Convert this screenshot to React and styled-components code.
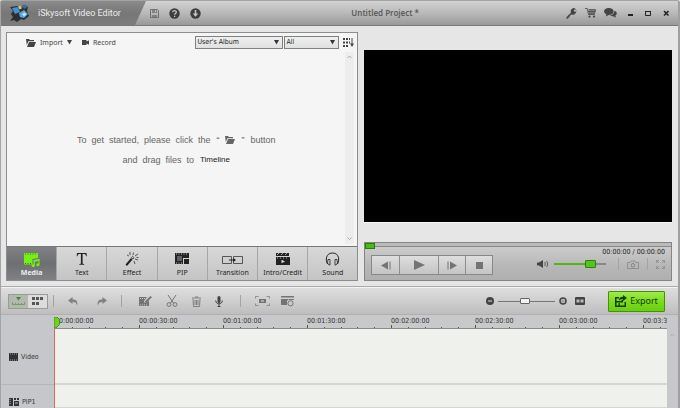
import React from "react";
import styled, { createGlobalStyle, css } from "styled-components";

const ui = `"DejaVu Sans Condensed", "Noto Sans", "DejaVu Sans", sans-serif`;
const body = `"Noto Sans", "Open Sans", sans-serif`;

const GlobalStyle = createGlobalStyle`
  * { box-sizing: border-box; }
  body { margin: 0; background: #e6e6e6; font-family: ${body}; font-size: 7px; color: #333; overflow: hidden; }
  button, select, input { font: inherit; color: inherit; margin: 0; }
`;

const Window = styled.div`
  min-height: 100vh;
  display: flex;
  flex-direction: column;
  border: 1px solid #a4a4a4;
  border-bottom: 0;
  border-right: 2px solid #a0a0a0;
  border-radius: 3px 3px 0 0;
  background: #e6e6e6;
`;

const TitleBar = styled.header`
  height: 25px;
  display: flex;
  align-items: center;
  background: linear-gradient(#d2d2d2, #b9b9b9 50%, #999);
  border-bottom: 1px solid #777;
`;

const Brand = styled.div`
  width: 145px;
  height: 100%;
  display: flex;
  align-items: center;
  gap: 6px;
  padding-left: 9px;
  color: #ececec;
  white-space: nowrap;
  background: linear-gradient(#8b8b8b, #777 50%, #7d7d7d);
  clip-path: polygon(0 0, 100% 0, 134px 100%, 0 100%);
`;

const BrandName = styled.h1`
  margin: 0;
  font: 400 9px/12px Roboto, ${body};
`;

const ProjectTitle = styled.div`
  flex: 1;
  text-align: right;
  padding-right: 147px;
  font-size: 8px;
  font-weight: 600;
  line-height: 12px;
  color: #5c5c5c;
`;

const IconRow = styled.div`
  display: flex;
  align-items: center;
  gap: ${(p) => p.$gap || 8}px;
  padding: 0 ${(p) => p.$right || 0}px 0 ${(p) => p.$left || 0}px;
`;

const IconButton = styled.button`
  display: inline-flex;
  align-items: center;
  gap: 4px;
  padding: 0;
  border: 0;
  background: none;
  line-height: 12px;
  white-space: nowrap;
  color: ${(p) => p.$tone || "#444"};
`;

const Workspace = styled.main`
  display: flex;
  gap: 6px;
  padding: 6px 6px 5px 5px;
  border-bottom: 1px solid #aaa;
`;

const MediaPanel = styled.section`
  flex: 352 1 0;
  min-width: 0;
  display: flex;
  flex-direction: column;
  border: 1px solid #8d8d8d;
  background: #f5f5f5;
`;

const MediaHeader = styled.div`
  display: flex;
  align-items: center;
  height: 19px;
  padding: 0 3px 0 19px;
`;

const Spacer = styled.div`
  flex: 1;
`;

const SelectBox = styled.label`
  position: relative;
  display: flex;
  width: ${(p) => p.$width}px;
  margin-right: ${(p) => p.$after}px;

  svg { position: absolute; right: 4px; top: 4px; pointer-events: none; }
`;

const Select = styled.select`
  appearance: none;
  width: 100%;
  height: 13px;
  padding: 0 1px;
  border: 1px solid #808080;
  border-radius: 0;
  background: linear-gradient(#f0f0f0, #e0e0e0);
  color: #222;
  line-height: 11px;
  font-size: 7px;
  font-family: ${ui};
`;

const DropArea = styled.div`
  flex: 1;
  display: flex;
  min-height: 194px;
`;

const Hint = styled.div`
  flex: 1;
  padding-top: 78px;
  font: 9px/20px "Liberation Sans", Arial, sans-serif;
  color: #666;
`;

const HintLine = styled.p`
  display: flex;
  justify-content: center;
  align-items: center;
  gap: 6px;
  margin: 0;
  white-space: pre;

  strong { font-weight: 400; font-size: 8px; color: #222; }
`;

const ScrollRail = styled.div`
  width: ${(p) => p.$width || 9}px;
  margin: ${(p) => (p.$width ? "0" : "0 3px 2px 0")};
  display: flex;
  flex-direction: column;
  justify-content: space-between;
  align-items: center;
  padding: ${(p) => (p.$width ? 18 : 3)}px 0 3px;
  background: ${(p) => p.$tone || "#ededed"};
`;

const Tabs = styled.nav`
  display: flex;
  height: 34px;
  border-top: 1px solid #777;
  background: linear-gradient(#d8d8d8, #c4c4c4);
`;

const Tab = styled.button`
  flex: 1 1 0;
  min-width: 0;
  padding: 5px 0 0;
  display: flex;
  flex-direction: column;
  align-items: center;
  border: 0;
  border-left: 1px solid #a6a6a6;
  background: none;
  line-height: 11px;
  color: #222;
  ${(p) =>
    p.$active &&
    css`
      border-left: 0;
      background: linear-gradient(#808184, #6e6f72 50%, #808184);
      color: #eee;
      font-weight: 700;
    `}
`;

const PreviewPanel = styled.section`
  flex: 309 1 0;
  min-width: 0;
  display: flex;
  flex-direction: column;
  padding-top: 18px;
`;

const Screen = styled.div`
  aspect-ratio: 309 / 174;
  background: #000;
  border-bottom: 1px solid #f8f8f8;
`;

const Player = styled.div`
  margin-top: auto;
  height: 39px;
  border: 1px solid #858585;
  background: linear-gradient(#d0d0d0, #b6b6b6 65%, #b0b0b0);
`;

const Progress = styled.div`
  height: 4px;
  background: #bbb;
  border-bottom: 1px solid #888;
`;

const PlayHead = styled.div`
  width: 10px;
  height: 6px;
  background: #4cba16;
  border: 1px solid #2c7d08;
`;

const PlayerBody = styled.div`
  display: flex;
  justify-content: space-between;
  padding: 0 6px;
`;

const Transport = styled.div`
  display: flex;
  height: 20px;
  margin-top: 8px;
  border: 1px solid #888;
  background: linear-gradient(#dedede, #c4c4c4);
`;

const TransportButton = styled.button`
  width: ${(p) => (p.$wide ? 39 : 27)}px;
  display: flex;
  align-items: center;
  justify-content: center;
  padding: 0;
  border: 0;
  border-left: ${(p) => (p.$first ? 0 : 1)}px solid #8e8e8e;
  background: none;
  color: #747474;
`;

const Status = styled.div`
  display: flex;
  flex-direction: column;
  align-items: flex-end;
`;

const Clock = styled.time`
  font: 7px/11px ${ui};
  color: #222;
`;

const Divider = styled.div`
  width: 1px;
  height: 12px;
  background: #a3a3a3;
`;

const Range = styled.input.attrs({ type: "range" })`
  appearance: none;
  width: ${(p) => p.$width}px;
  height: 10px;
  background: ${(p) =>
    p.$green
      ? "linear-gradient(90deg, #52b51c 70%, #888 70%) center / 100% 2px no-repeat"
      : "linear-gradient(#777, #777) center / 100% 1px no-repeat"};

  &::-webkit-slider-thumb {
    appearance: none;
    width: ${(p) => (p.$green ? 11 : 10)}px;
    height: ${(p) => (p.$green ? 8 : 6)}px;
    border: 1px solid ${(p) => (p.$green ? "#317c10" : "#666")};
    border-radius: 1px;
    background: ${(p) => (p.$green ? "#55c41c" : "#f2f2f2")};
  }
`;

const ToolBar = styled.div`
  height: 28px;
  display: flex;
  align-items: center;
  padding: 0 13px 0 7px;
  border-top: 1px solid #f4f4f4;
  background: linear-gradient(#dedede, #bebebe);
  border-bottom: 1px solid #b0b0b0;
`;

const ViewToggle = styled.div`
  display: flex;
  height: 15px;
  border: 1px solid #9a9a9a;
`;

const ViewButton = styled.button`
  width: 19px;
  display: flex;
  align-items: center;
  justify-content: center;
  padding: 0;
  border: 0;
  color: #555;
  background: ${(p) => (p.$active ? "#b4b8b0" : "#dcdcdc")};
`;

const ExportButton = styled.button`
  display: flex;
  align-items: center;
  justify-content: center;
  gap: 3px;
  width: 57px;
  height: 21px;
  margin-left: 23px;
  padding: 0;
  border: 1px solid #4b8d0c;
  border-radius: 1px;
  background: linear-gradient(#9fec4a, #7bdc1c 50%, #69cf10);
  font-size: 9px;
  font-weight: 400;
  line-height: 12px;
  color: #163c05;
`;

const Timeline = styled.section`
  flex: 1;
  display: flex;
  background: #c8c9cb;
`;

const TrackNames = styled.div`
  width: 53px;
  padding-top: 14px;
  background: #c6c7ca;
`;

const TrackName = styled.div`
  display: flex;
  align-items: center;
  gap: 3px;
  height: ${(p) => p.$height}px;
  padding-left: 8px;
  font: 7px/12px ${ui};
  color: #333;
  border-bottom: 1px solid #b5b5b8;
`;

const Lanes = styled.div`
  flex: 1;
  min-width: 0;
  display: flex;
  flex-direction: column;
  position: relative;
`;

const Ruler = styled.div`
  height: 14px;
  display: flex;
  overflow: hidden;
  padding-left: 1px;
  border-bottom: 1px solid #8b8b8b;
`;

const RulerMark = styled.div`
  flex: none;
  width: 84px;
  padding-top: 2px;
  display: flex;
  flex-direction: column;
  justify-content: space-between;
  font: 7px/8px ${ui};
  color: #333;
`;

const Ticks = styled.div`
  display: grid;
  grid-template-columns: repeat(5, 1fr);
  align-items: end;
  height: 3px;
`;

const Tick = styled.span`
  height: ${(p) => (p.$major ? 3 : 1)}px;
  border-left: 1px solid #555;
`;

const Lane = styled.div`
  height: ${(p) => p.$height}px;
  border-bottom: 2px solid #d4d6d2;
  background: #eff1ec;
`;

const Cursor = styled.div`
  position: absolute;
  inset: 2px auto 0 0;
  width: 1px;
  background: #dc6464;

  svg { display: block; }
`;

const Icon = ({ w, h, children }) => (
  <svg width={w} height={h} viewBox={`0 0 ${w} ${h}`} fill="currentColor" aria-hidden="true">
    {children}
  </svg>
);

const stroke = { fill: "none", stroke: "currentColor" };

const Logo = () => (
  <Icon w={22} h={20}>
    <path d="M0 4l8-1 4 3 1-4 5 2-1 4 2 5-5 4-3-1-4 3-3-2-4 1 3-4-2-3 2-3z" fill="#2b2f33" />
    <path d="M2 5l6-1 2 5-5 2z" fill="#4a8fcb" />
    <path d="M8 3.500l2-1 1.500 3-2 1z" fill="#d9cd7e" />
    <path d="M9 10l5-3 4 4-4 4-4-1z" fill="#5ba7e0" />
    <path d="M12 11l2.500-1.500 2 2-2.500 2z" fill="#c4e2f2" />
    <path d="M12 2.500l4-1 1 3-3 1.500z" fill="#3b6d98" />
  </Icon>
);
const Save = () => (
  <Icon w={9} h={9}>
    <path d="M.5.5h7l1 1v7h-8z" {...stroke} />
    <path d="M2 1h5v3H2zM2 6h5v3H2z" opacity=".75" />
    <path d="M5 1h1v2H5z" fill="#bbb" />
  </Icon>
);
const Help = () => (
  <Icon w={11} h={11}>
    <circle cx="5.5" cy="5.5" r="5.2" />
    <path d="M3.7 4.2c0-2.2 3.7-2.1 3.6 0 0 1.3-1.7 1.2-1.7 2.5M5.6 7.8v1.2" fill="none" stroke="#c4c4c4" strokeWidth="1.3" />
  </Icon>
);
const Download = () => (
  <Icon w={11} h={11}>
    <circle cx="5.5" cy="5.5" r="5.2" />
    <path d="M4.7 2h1.6v3.5h2L5.5 8.8 2.7 5.5h2z" fill="#c4c4c4" />
  </Icon>
);
const Key = () => (
  <Icon w={12} h={11}>
    <path d="M8 0a3.4 3.4 0 0 0-3.1 4.7L.6 9l-.2 1.7 2-.1V9.3h1.2V8.1l1.9-1.6A3.4 3.4 0 1 0 8 0zm1 1.600a1.100 1.100 0 1 1 0 2.200 1.100 1.100 0 0 1 0-2.200z" fillRule="evenodd" />
  </Icon>
);
const Cart = () => (
  <Icon w={12} h={10}>
    <path d="M0 .5h2.2l1.3 6H10M3.2 1.8h7.6L9.6 5.2H3.7M5 1v5M7 1v5M9 1v5M3 3.5h7" {...stroke} strokeWidth=".8" />
    <circle cx="4.5" cy="8.6" r="1.1" />
    <circle cx="9" cy="8.6" r="1.1" />
  </Icon>
);
const Chat = () => (
  <Icon w={13} h={10}>
    <path d="M4.8 0c2.8 0 4.8 1.5 4.8 3.5S7.400 7 4.800 7L2 8.600l.3-2.300C1 5.700 0 4.700 0 3.500 0 1.500 2 0 4.800 0z" />
    <path d="M10.400 2.800c1.500.4 2.400 1.300 2.400 2.500 0 1-.6 1.700-1.400 2.200l.3 2.300-2.500-1.600c-1.300.1-2.500-.2-3.200-.8 2.600-.2 4.400-1.900 4.400-4.600z" />
  </Icon>
);
const Minimize = () => <Icon w={7} h={7}><path d="M1 4h5v2H1z" /></Icon>;
const Maximize = () => <Icon w={7} h={7}><path d="M.5 1.500h5v4h-5zM0 1.500h6" {...stroke} /></Icon>;
const Close = () => <Icon w={7} h={7}><path d="M1 1l4.500 4.500M5.500 1L1 5.500" {...stroke} strokeWidth="1.600" /></Icon>;
const Folder = () => (
  <Icon w={10} h={8}>
    <path d="M0 0h3l1 1h4v1.200H2.400L.8 6z" />
    <path d="M3 3h7L8 8H1z" />
  </Icon>
);
const Caret = () => <Icon w={5} h={5}><path d="M0 0h5L2.500 4.500z" /></Icon>;
const Camcorder = () => <Icon w={7} h={5}><path d="M0 0h4.500v1.500L7 .300v4.400L4.500 3.500V5H0z" /></Icon>;
const Sort = () => (
  <Icon w={11} h={9}>
    <path d="M0 0h2v2H0zM3 0h2v2H3zM6 0h1v2H6zM0 3.500h2v2H0zM3 3.500h2v2H3zM6 3.500h1v2H6zM0 7h2v2H0zM3 7h2v2H3z" />
    <path d="M8.500 0h1v5.500H11L9 9 7 5.500h1.500z" />
  </Icon>
);
const Chevron = ({ down }) => (
  <Icon w={5} h={4}><path d={down ? "M.5.500l2 2 2-2" : "M.500 3l2-2 2 2"} fill="none" stroke="#aaa" /></Icon>
);

const MediaIcon = () => (
  <Icon w={16} h={15}>
    <g fill="#76ef16">
      <path d="M0 1h14v5L8.500 7v5.500H0z" />
      <path d="M9.500 8L15.600 6.800v6a1.700 1.400 0 1 1-1-1.300V9l-3.700.7v4A1.700 1.400 0 1 1 9.500 12.300z" />
    </g>
    <path d="M1 2h1M3.500 2h1M6 2h1M8.500 2h1M11 2h1M1 11.500h1M3.500 11.500h1M6 11.500h1" stroke="#3b6c19" />
  </Icon>
);
const TextIcon = () => (
  <Icon w={12} h={15}><path d="M1 1h9.500l.3 3.200h-.7C9.700 2.600 9.200 2 7.800 2H6.600v9c0 .8.300 1 1.600 1.100v.6H3.300v-.6C4.600 12 4.900 11.800 4.900 11V2H3.700C2.300 2 1.800 2.600 1.400 4.200H.7z" /></Icon>
);
const EffectIcon = () => (
  <Icon w={14} h={15}>
    <path d="M.5 12.500L6 6l1.500 1.500L2 14z" />
    <path d="M6.500 5.500l1-1.200L9 5.700 8 7zM5 0v3M8.500.5L8 3M2 3l2 1M10 4l3-2M10 7l3 1M9 9l1 3M11.500 5.500h2" {...stroke} strokeWidth=".7" />
  </Icon>
);
const PipIcon = () => (
  <Icon w={15} h={15}>
    <path d="M0 1h14v5H8v6H0z" />
    <path d="M9 7h5v5H9z" />
    <path d="M1 2h1M3.500 2h1M6 2h1M8.500 2h1M11 2h1M1 11h1M3.500 11h1M6 11h1" stroke="#ccc" />
    <path d="M2 4h5v5H2z" fill="#5e6062" />
  </Icon>
);
const TransitionIcon = () => (
  <Icon w={21} h={15}>
    <path d="M.5 4.500h9v7h-9zM11.500 4.500h9v7h-9z" {...stroke} strokeWidth=".7" />
    <path d="M7 7.500h4.500V6L14 8l-2.500 2V8.500H7z" />
  </Icon>
);
const CreditIcon = () => (
  <Icon w={16} h={15}>
    <path d="M1 1h13v3H1zM1 5h14v8H1z" />
    <path d="M2 3l2-2M6 3l2-2M10 3l2-2M2 6h1M5 6h1M8 6h1M11 6h1" stroke="#ccc" strokeWidth=".8" />
    <path d="M6.500 7.700v3.600l3.500-1.800z" fill="#ddd" />
  </Icon>
);
const SoundIcon = () => (
  <Icon w={15} h={15}>
    <path d="M2.500 12C.5 8.500.5 1 7.500 1s7 7.500 5 11" {...stroke} />
    <path d="M3 7.500h2v5.500H4L2.500 11zM10 7.500h2l.5 3.500-1.500 2h-1z" {...stroke} strokeWidth=".8" />
  </Icon>
);

const StepBack = () => <Icon w={10} h={9}><path d="M7 .5v8L0 4.500zM8.500.5h1v8h-1z" /></Icon>;
const Play = () => <Icon w={11} h={10}><path d="M0 0v10l11-5z" /></Icon>;
const StepForward = () => <Icon w={10} h={9}><path d="M3 .5v8l7-4zM.5.500h1v8h-1z" /></Icon>;
const Stop = () => <Icon w={7} h={7}><path d="M0 0h7v7H0z" /></Icon>;
const Speaker = () => (
  <Icon w={12} h={8}>
    <path d="M0 2.500h2L6 0v8L2 5.500H0z" />
    <path d="M7.500 2c1 1 1 3 0 4M9.500 1c1.500 1.500 1.500 4.500 0 6" {...stroke} strokeWidth=".8" />
  </Icon>
);
const Camera = () => (
  <Icon w={12} h={9}>
    <path d="M.5 2.500h2.700l1-1.500h3.600l1 1.500h2.700v6H.500z" {...stroke} strokeWidth=".8" />
    <circle cx="6" cy="5.300" r="1.800" {...stroke} />
  </Icon>
);
const FullScreen = () => (
  <Icon w={9} h={9}><path d="M.5 3V.500H3M6 .5h2.500V3M.5 6v2.500H3M6 8.500h2.500V6M1 1l2 2M8 1L6 3M1 8l2-2M8 8L6 6" {...stroke} strokeWidth=".7" /></Icon>
);

const TimelineView = () => (
  <Icon w={13} h={9}>
    <path d="M4 0h5L6.500 3.500z" fill="#3f8f22" />
    <path d="M.5 5v2.500h12V5M3.500 6v1M6.500 6v1M9.500 6v1" fill="none" stroke="#5e9b48" strokeWidth=".8" />
  </Icon>
);
const GridView = () => (
  <Icon w={11} h={8}><path d="M0 0h3v3H0zM4 0h3v3H4zM8 0h3v3H8zM0 5h3v3H0zM4 5h3v3H4z" /></Icon>
);
const Undo = () => <Icon w={11} h={9}><path d="M0 3.500L4.500 0v2.200C8.500 2.200 10.500 5 8.800 9 9 6.300 7.800 5 4.500 5v2z" /></Icon>;
const Redo = () => <Icon w={11} h={9}><path d="M11 3.500L6.500 0v2.200C2.500 2.200.5 5 2.200 9 2 6.300 3.200 5 6.500 5v2z" /></Icon>;
const EditClip = () => (
  <Icon w={13} h={11}>
    <path d="M0 1h8L5 5l.5 2L8 6l2-2v6H0z" />
    <path d="M11.500 0L13 1.300 7.500 6.200l-1.700.7.5-1.800z" />
    <path d="M1 2.500h1M3 2.500h1M5 2.500h1M1 9h1M3 9h1M5 9h1M7 9h1" stroke="#ccc" />
  </Icon>
);
const Cut = () => (
  <Icon w={12} h={12}>
    <path d="M2 0l5.500 8M10 0L4.500 8" {...stroke} />
    <circle cx="3" cy="9.500" r="1.900" {...stroke} />
    <circle cx="9" cy="9.500" r="1.900" {...stroke} />
  </Icon>
);
const Trash = () => (
  <Icon w={9} h={11}>
    <path d="M0 2h9M3 1h3M1 3l.5 7.500h6L8 3M3 4v5M4.500 4v5M6 4v5" {...stroke} />
  </Icon>
);
const Mic = () => (
  <Icon w={8} h={11}>
    <rect x="2.500" width="3" height="7" rx="1.500" />
    <path d="M.7 4.500c0 4.400 6.600 4.400 6.600 0M4 8v2.500M2.500 10.500h3" {...stroke} />
  </Icon>
);
const CropIcon = () => (
  <Icon w={15} h={10}>
    <path d="M4 3h7v4H4z" />
    <path d="M6 4.500h3v1H6z" fill="#ddd" />
    <path d="M.5 2.500v-2h3M11.500.5h3v2M.5 7.500v2h3M11.500 9.500h3v-2" {...stroke} strokeWidth=".7" />
  </Icon>
);
const Detect = () => (
  <Icon w={14} h={11}>
    <path d="M0 0h13v1.500H0zM0 3h8L6 5v4H0z" />
    <circle cx="9.500" cy="7.300" r="2.600" {...stroke} />
    <path d="M8 3h5v1H8z" />
  </Icon>
);
const ZoomOut = () => (
  <Icon w={8} h={8}><circle cx="4" cy="4" r="4" /><path d="M2 3.500h4v1H2z" fill="#ddd" /></Icon>
);
const ZoomIn = () => (
  <Icon w={8} h={8}><circle cx="4" cy="4" r="3" {...stroke} strokeWidth="1.500" /><path d="M2 3.500h4v1H2zM3.500 2h1v4h-1z" opacity=".4" /></Icon>
);
const Fit = () => (
  <Icon w={10} h={8}><rect width="10" height="8" rx="1" /><path d="M1.500 2.500h3v3h-3zM5.500 2.500h3v3h-3z" fill="#bbb" /></Icon>
);
const ExportIcon = () => (
  <Icon w={12} h={12}>
    <path d="M0 2h4v1.500H1.500v2.500h5V5H8v2.500H1.500v3h8V7H11v5H0z" />
    <path d="M4 5.500C4 3 5.300 1.800 8 1.800V0l4 3-4 3V4.200C6 4.200 5 4.500 4 5.500z" />
    <path d="M3.500 8h1.300v3H3.500z" />
  </Icon>
);
const Film = () => (
  <Icon w={9} h={8}>
    <path d="M0 0h9v8H0z" />
    <path d="M1 1h1M3 1h1M5 1h1M7 1h1M1 7h1M3 7h1M5 7h1M7 7h1" stroke="#bbb" strokeWidth=".8" />
  </Icon>
);
const PipTrack = () => (
  <Icon w={10} h={8}>
    <path d="M0 0h4v8H0zM5 0h2v2H5zM8 0h2v2H8zM5 3h5v5H5z" />
    <path d="M1 1v6" stroke="#bbb" strokeDasharray="1 1" /><path d="M6 5h3" stroke="#bbb" />
  </Icon>
);
const HeadMarker = () => (
  <Icon w={6} h={11}><path d="M0 0h3l2.500 2.500v5L2 11H0z" fill="#72cf20" stroke="#2e780e" strokeWidth=".7" /></Icon>
);

const tabs = [
  ["Media", MediaIcon],
  ["Text", TextIcon],
  ["Effect", EffectIcon],
  ["PIP", PipIcon],
  ["Transition", TransitionIcon],
  ["Intro/Credit", CreditIcon],
  ["Sound", SoundIcon],
];

const marks = [
  "00:00:00:00", "00:00:30:00", "00:01:00:00", "00:01:30:00",
  "00:02:00:00", "00:02:30:00", "00:03:00:00", "00:03:30:00",
];

function Action({ label, icon: Glyph, tone }) {
  return (
    <IconButton aria-label={label} $tone={tone}>
      <Glyph />
    </IconButton>
  );
}

export default function App() {
  return (
    <Window>
      <GlobalStyle />
      <TitleBar>
        <Brand>
          <Logo />
          <BrandName>iSkysoft Video Editor</BrandName>
        </Brand>
        <IconRow $gap={10} $left={4}>
          <Action label="Save" icon={Save} tone="#707070" />
          <Action label="Help" icon={Help} tone="#3d3d3d" />
          <Action label="Download" icon={Download} tone="#3d3d3d" />
        </IconRow>
        <ProjectTitle>Untitled Project *</ProjectTitle>
        <IconRow $gap={7} $right={8}>
          <Action label="Register" icon={Key} />
          <Action label="Store" icon={Cart} />
          <Action label="Feedback" icon={Chat} />
          <IconRow $gap={11} $left={3}>
            <Action label="Minimize" icon={Minimize} tone="#222" />
            <Action label="Maximize" icon={Maximize} tone="#222" />
            <Action label="Close" icon={Close} tone="#222" />
          </IconRow>
        </IconRow>
      </TitleBar>

      <Workspace>
        <MediaPanel>
          <MediaHeader>
            <IconRow $gap={10}>
              <IconButton>
                <Folder />Import<Caret />
              </IconButton>
              <IconButton>
                <Camcorder />Record
              </IconButton>
            </IconRow>
            <Spacer />
            <SelectBox $width={88} $after={1}>
              <Select aria-label="Album"><option>User's Album</option></Select>
              <Caret />
            </SelectBox>
            <SelectBox $width={55} $after={4}>
              <Select aria-label="Type"><option>All</option></Select>
              <Caret />
            </SelectBox>
            <Action label="Sort" icon={Sort} />
          </MediaHeader>
          <DropArea>
            <Hint>
              <HintLine>
                <span>{"To  get  started,  please  click  the"}</span>
                <span>“</span>
                <Folder />
                <span>”</span>
                <span>button</span>
              </HintLine>
              <HintLine>
                <span>{"and  drag  files  to"}</span>
                <strong>Timeline</strong>
              </HintLine>
            </Hint>
            <ScrollRail><Chevron /><Chevron down /></ScrollRail>
          </DropArea>
          <Tabs>
            {tabs.map(([name, Glyph], i) => (
              <Tab key={name} $active={i === 0}>
                <Glyph />
                {name}
              </Tab>
            ))}
          </Tabs>
        </MediaPanel>

        <PreviewPanel>
          <Screen />
          <Player>
            <Progress><PlayHead /></Progress>
            <PlayerBody>
              <Transport>
                <TransportButton $first aria-label="Previous frame"><StepBack /></TransportButton>
                <TransportButton $wide aria-label="Play"><Play /></TransportButton>
                <TransportButton aria-label="Next frame"><StepForward /></TransportButton>
                <TransportButton aria-label="Stop"><Stop /></TransportButton>
              </Transport>
              <Status>
                <Clock>00:00:00 / 00:00:00</Clock>
                <IconRow $gap={8}>
                  <IconRow $gap={5} $right={4}>
                    <Action label="Mute" icon={Speaker} />
                    <Range aria-label="Volume" $green $width={52} min={0} max={100} defaultValue={76} />
                  </IconRow>
                  <Divider />
                  <Action label="Snapshot" icon={Camera} tone="#858585" />
                  <Divider />
                  <Action label="Full screen" icon={FullScreen} tone="#858585" />
                </IconRow>
              </Status>
            </PlayerBody>
          </Player>
        </PreviewPanel>
      </Workspace>

      <ToolBar>
        <ViewToggle>
          <ViewButton $active aria-label="Timeline view"><TimelineView /></ViewButton>
          <ViewButton aria-label="Storyboard view"><GridView /></ViewButton>
        </ViewToggle>
        <IconRow $gap={14} $left={5}>
          <Divider />
          <IconRow $gap={17}>
            <Action label="Undo" icon={Undo} tone="#828282" />
            <Action label="Redo" icon={Redo} tone="#828282" />
          </IconRow>
          <Divider />
          <IconRow $gap={14} $left={3} $right={3}>
            <Action label="Edit" icon={EditClip} tone="#747474" />
            <Action label="Cut" icon={Cut} tone="#747474" />
            <Action label="Delete" icon={Trash} tone="#808080" />
            <Action label="Voiceover" icon={Mic} tone="#444" />
          </IconRow>
          <Divider />
          <IconRow $gap={11}>
            <Action label="Crop" icon={CropIcon} tone="#747474" />
            <Action label="Scene detection" icon={Detect} tone="#747474" />
          </IconRow>
        </IconRow>
        <Spacer />
        <IconRow $gap={4}>
          <Action label="Zoom out" icon={ZoomOut} />
          <Range aria-label="Timeline zoom" $width={57} min={0} max={100} defaultValue={47} />
          <IconRow $gap={8}>
            <Action label="Zoom in" icon={ZoomIn} />
            <Action label="Zoom to fit" icon={Fit} />
          </IconRow>
        </IconRow>
        <ExportButton><ExportIcon />Export</ExportButton>
      </ToolBar>

      <Timeline>
        <TrackNames>
          <TrackName $height={56}><Film />Video</TrackName>
          <TrackName $height={34}><PipTrack />PIP1</TrackName>
        </TrackNames>
        <Lanes>
          <Ruler>
            {marks.map((m) => (
              <RulerMark key={m}>
                {m}
                <Ticks>
                  <Tick $major /><Tick /><Tick /><Tick /><Tick />
                </Ticks>
              </RulerMark>
            ))}
          </Ruler>
          <Lane $height={56} />
          <Lane $height={24} />
          <Cursor><HeadMarker /></Cursor>
        </Lanes>
        <ScrollRail $tone="#c6c8cb" $width={11}><Chevron /></ScrollRail>
      </Timeline>
    </Window>
  );
}
